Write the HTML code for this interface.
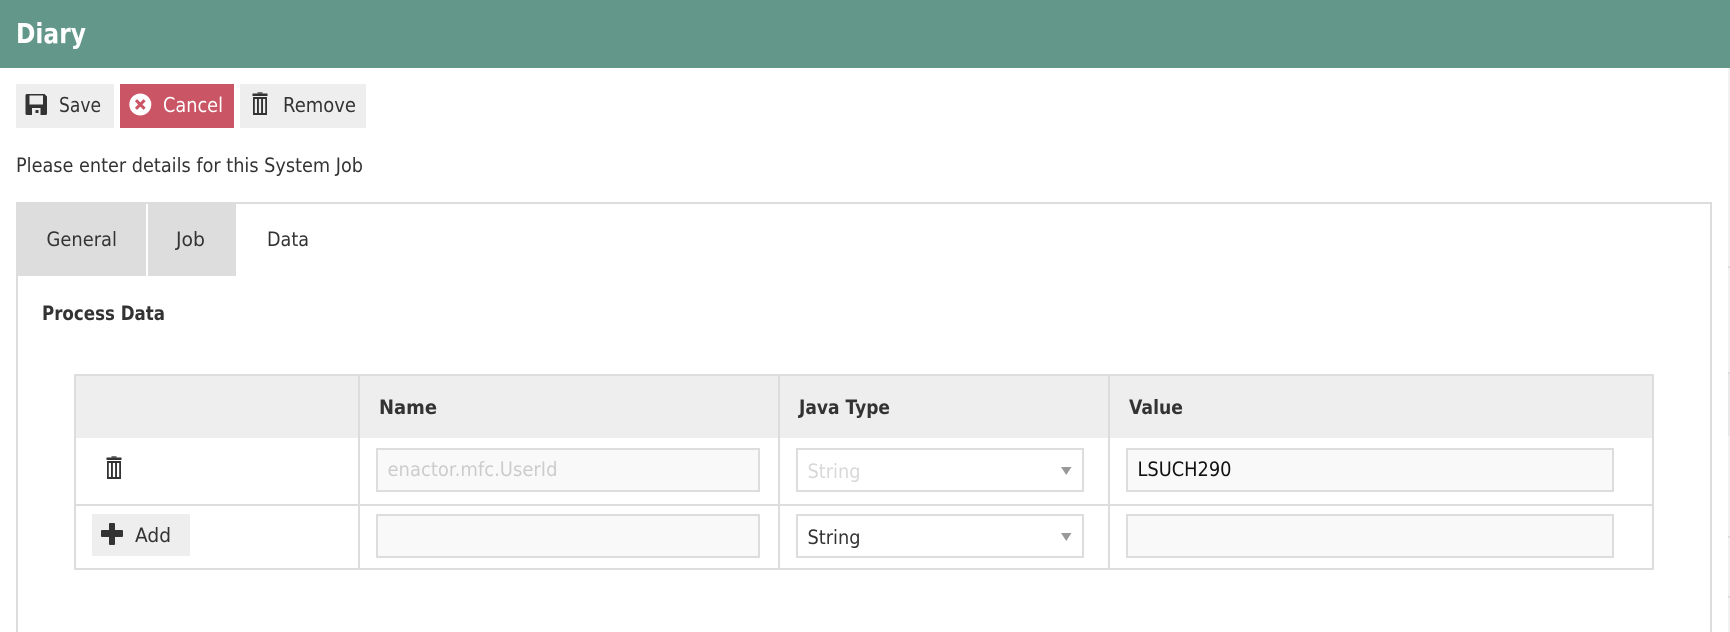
<!DOCTYPE html>
<html lang="en">
<head>
<meta charset="utf-8">
<title>Diary</title>
<style>
html,body{margin:0;padding:0;background:#fff;width:1730px;height:632px;overflow:hidden}
svg{display:block}
text{font-family:"DejaVu Sans","Liberation Sans",sans-serif;font-size:19.500px;fill:#333}
.b{font-weight:bold}
</style>
</head>
<body>
<svg width="1730" height="632" viewBox="0 0 1730 632" xmlns="http://www.w3.org/2000/svg">
<defs>
<g id="trash">
<rect x="5.500" y="-1" width="5" height="2" fill="#777"/>
<rect x="0.500" y="0.500" width="15" height="2.500" fill="#333"/>
<path fill-rule="evenodd" d="M1 4h14v18H1zM2.800 6v14h2.200V6zM6.900 6v14h2.200V6zM11 6v14h2.200V6z" fill="#333"/>
</g>
</defs>
<rect x="0" y="0" width="1730" height="68" fill="#62978a"/>
<text x="16" y="43" class="b" style="font-size:27.500px;fill:#fff" textLength="70" lengthAdjust="spacingAndGlyphs">Diary</text>

<rect x="1728" y="68" width="2" height="564" fill="#f2f2f2"/>
<rect x="1728" y="266" width="2" height="2" fill="#ddd"/>
<rect x="1728" y="372" width="2" height="64" fill="#e9e9e9"/>
<rect x="1728" y="372" width="2" height="2" fill="#ddd"/>
<rect x="1728" y="536" width="2" height="2" fill="#ddd"/>
<rect x="1728" y="596" width="2" height="2" fill="#ddd"/>

<rect x="16" y="84" width="98" height="44" fill="#eee"/>
<path fill-rule="evenodd" d="M27 94h17.500l2.500 2.500v17a1.500 1.500 0 0 1-1.500 1.500h-18.500a1.500 1.500 0 0 1-1.500-1.500v-18a1.500 1.500 0 0 1 1.500-1.500zM29.500 95.500v9h13.500v-9zM32 108v7h8.500v-7zM35.500 110h3v3h-3z" fill="#333"/>
<text x="59" y="112" style="font-size:20.500px" textLength="42" lengthAdjust="spacingAndGlyphs">Save</text>

<rect x="120" y="84" width="114" height="44" fill="#c95565"/>
<circle cx="140.300" cy="104.500" r="11" fill="#fff"/>
<path d="M136 100.200L144.600 108.800M144.600 100.200L136 108.800" stroke="#c95565" stroke-width="3" fill="none"/>
<text x="163" y="112" style="font-size:20.500px;fill:#fff" textLength="60" lengthAdjust="spacingAndGlyphs">Cancel</text>

<rect x="240" y="84" width="126" height="44" fill="#eee"/>
<use href="#trash" x="252" y="93"/>
<text x="283" y="112" style="font-size:20.500px" textLength="73" lengthAdjust="spacingAndGlyphs">Remove</text>

<text x="16" y="172" textLength="347" lengthAdjust="spacingAndGlyphs">Please enter details for this System Job</text>

<rect x="16" y="202" width="1696" height="2" fill="#ddd"/>
<rect x="16" y="202" width="2" height="430" fill="#ddd"/>
<rect x="1710" y="202" width="2" height="430" fill="#ddd"/>
<rect x="16" y="204" width="130" height="72" fill="#ddd"/>
<rect x="148" y="204" width="88" height="72" fill="#ddd"/>
<text x="46.500" y="246" textLength="70.500" lengthAdjust="spacingAndGlyphs">General</text>
<text x="176" y="246" textLength="29" lengthAdjust="spacingAndGlyphs">Job</text>
<text x="267" y="246" textLength="42" lengthAdjust="spacingAndGlyphs">Data</text>

<text x="42" y="320" class="b" textLength="123" lengthAdjust="spacingAndGlyphs">Process Data</text>

<rect x="76" y="376" width="1576" height="62" fill="#eee"/>
<rect x="74" y="374" width="1580" height="2" fill="#ddd"/>
<rect x="74" y="504" width="1580" height="2" fill="#ddd"/>
<rect x="74" y="568" width="1580" height="2" fill="#ddd"/>
<rect x="74" y="374" width="2" height="196" fill="#ddd"/>
<rect x="358" y="374" width="2" height="196" fill="#ddd"/>
<rect x="778" y="374" width="2" height="196" fill="#ddd"/>
<rect x="1108" y="374" width="2" height="196" fill="#ddd"/>
<rect x="1652" y="374" width="2" height="196" fill="#ddd"/>

<text x="379" y="414" class="b" textLength="58" lengthAdjust="spacingAndGlyphs">Name</text>
<text x="799" y="414" class="b" textLength="91" lengthAdjust="spacingAndGlyphs">Java Type</text>
<text x="1129" y="414" class="b" textLength="54" lengthAdjust="spacingAndGlyphs">Value</text>

<use href="#trash" x="106" y="457"/>

<rect x="377" y="449" width="382" height="42" fill="#f9f9f9" stroke="#ddd" stroke-width="2"/>
<text x="387.500" y="476" style="fill:#ccc" textLength="170" lengthAdjust="spacingAndGlyphs">enactor.mfc.UserId</text>
<rect x="797" y="449" width="286" height="42" fill="#fff" stroke="#ddd" stroke-width="2"/>
<text x="807.500" y="478" style="fill:#d8d8d8" textLength="53" lengthAdjust="spacingAndGlyphs">String</text>
<path d="M1061 467h10.500l-5.250 8z" fill="#999"/>
<rect x="1127" y="449" width="486" height="42" fill="#f9f9f9" stroke="#ddd" stroke-width="2"/>
<text x="1137.500" y="476" style="fill:#111" textLength="94" lengthAdjust="spacingAndGlyphs">LSUCH290</text>

<rect x="92" y="514" width="98" height="42" fill="#eee"/>
<path d="M110 523h4a1 1 0 0 1 1 1v6h7a1 1 0 0 1 1 1v5a1 1 0 0 1-1 1h-7v7a1 1 0 0 1-1 1h-4a1 1 0 0 1-1-1v-7h-7a1 1 0 0 1-1-1v-5a1 1 0 0 1 1-1h7v-6a1 1 0 0 1 1-1z" fill="#333"/>
<text x="135" y="542" textLength="36" lengthAdjust="spacingAndGlyphs">Add</text>

<rect x="377" y="515" width="382" height="42" fill="#f9f9f9" stroke="#ddd" stroke-width="2"/>
<rect x="797" y="515" width="286" height="42" fill="#fff" stroke="#ddd" stroke-width="2"/>
<text x="807.500" y="544" textLength="53" lengthAdjust="spacingAndGlyphs">String</text>
<path d="M1061 533h10.500l-5.250 8z" fill="#999"/>
<rect x="1127" y="515" width="486" height="42" fill="#f9f9f9" stroke="#ddd" stroke-width="2"/>
</svg>
</body>
</html>
